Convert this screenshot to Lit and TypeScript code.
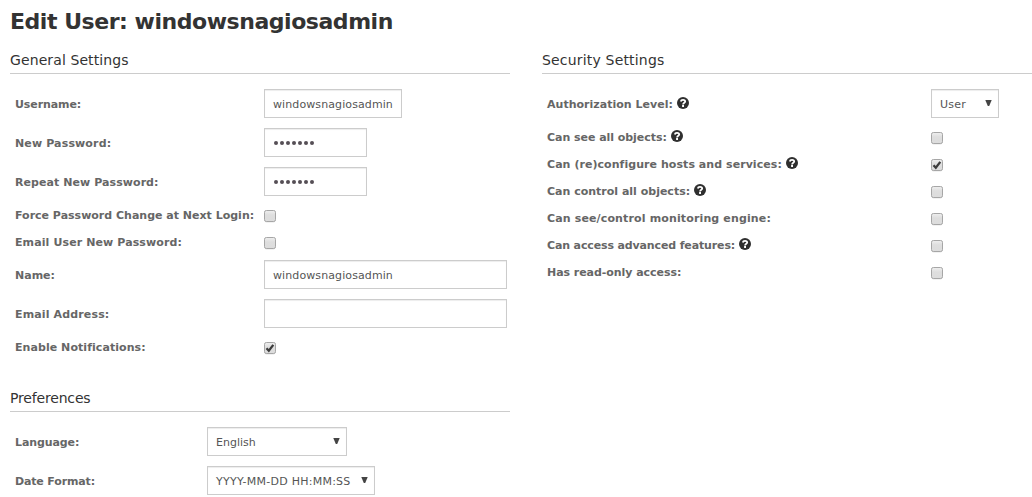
import { LitElement, html, css, svg, nothing } from "lit";
import { customElement, property } from "lit/decorators.js";

interface Row {
  label: string;
  track?: number;
  help?: boolean;
  kind: "text" | "password" | "check" | "select";
  value?: string;
  vtrack?: number;
  width?: number;
  checked?: boolean;
}

const general: Row[] = [
  { label: "Username:", track: -0.1, kind: "text", value: "windowsnagiosadmin", vtrack: 0.1, width: 138 },
  { label: "New Password:", track: 0.14, kind: "password", value: "•••••••", width: 103 },
  { label: "Repeat New Password:", track: 0.07, kind: "password", value: "•••••••", width: 103 },
  { label: "Force Password Change at Next Login:", kind: "check" },
  { label: "Email User New Password:", track: 0.11, kind: "check" },
  { label: "Name:", kind: "text", value: "windowsnagiosadmin", vtrack: 0.1, width: 243 },
  { label: "Email Address:", track: 0.14, kind: "text", value: "", width: 243 },
  { label: "Enable Notifications:", track: 0.06, kind: "check", checked: true },
];

const preferences: Row[] = [
  { label: "Language:", track: -0.1, kind: "select", value: "English", width: 140 },
  { label: "Date Format:", track: -0.15, kind: "select", value: "YYYY-MM-DD HH:MM:SS", vtrack: 0.25, width: 168 },
];

const security: Row[] = [
  { label: "Authorization Level:", track: 0.02, help: true, kind: "select", value: "User", vtrack: 0.25, width: 68 },
  { label: "Can see all objects:", track: -0.04, help: true, kind: "check" },
  { label: "Can (re)configure hosts and services:", track: 0.055, help: true, kind: "check", checked: true },
  { label: "Can control all objects:", help: true, kind: "check" },
  { label: "Can see/control monitoring engine:", track: 0.14, kind: "check" },
  { label: "Can access advanced features:", track: -0.135, help: true, kind: "check" },
  { label: "Has read-only access:", track: -0.05, kind: "check" },
];

@customElement("settings-row")
class SettingsRow extends LitElement {
  @property({ attribute: false }) row!: Row;

  static styles = css`
    :host { display: block; }
    .row { display: flex; align-items: center; height: 39px; padding-left: 5px; box-sizing: border-box; font-size: 11px; line-height: 17px; white-space: nowrap; }
    .row.short { height: 27px; }
    .label { display: flex; width: var(--label-col); flex: none; padding-top: 2px; font-weight: bold; color: #666; }
    .help { display: block; margin: 1px 0 0 4px; }
    .field { box-sizing: border-box; display: flex; align-items: center; justify-content: space-between; height: 29px; border: 1px solid #ccc; padding: 0 6px 0 8px; color: #555; background: #fff; box-shadow: inset 0 1px 1px rgba(0, 0, 0, 0.075); }
    .value { padding-top: 2px; }
    .dots { display: flex; gap: 2px; padding: 1px 0 0 1px; }
    .dot { width: 4px; height: 4px; border-radius: 50%; background: #554f55; }
    .box { display: block; margin-top: 3px; }
    .arrow { display: block; margin-top: -1px; }
  `;

  render() {
    const r = this.row;
    return html`<div class="row ${r.kind === "check" ? "short" : ""}">
      <div class="label">
        <span style="letter-spacing:${r.track ?? 0}px">${r.label}</span>
        ${r.help ? this.helpIcon() : nothing}
      </div>
      ${r.kind === "check" ? this.box() : this.field()}
    </div>`;
  }

  helpIcon() {
    return html`<svg class="help" width="12" height="12" viewBox="0 0 12 12">
      <circle cx="6" cy="6" r="6" fill="#2f2f2f" />
      <path d="M3.800 4.500C4 3.200 4.800 2.800 6 2.800s2.200.6 2.200 1.700C8.200 5.700 6.100 5.800 6.100 7.400" fill="none" stroke="#fff" stroke-width="1.800" />
      <path d="M5.100 8.100h1.900v1.800h-1.900z" fill="#fff" />
    </svg>`;
  }

  box() {
    return html`<svg class="box" width="12" height="13" viewBox="0 0 12 13">
      <defs><linearGradient id="g" x2="0" y2="1"><stop offset="0" stop-color="#efefef" /><stop offset=".4" stop-color="#dedede" /><stop offset="1" stop-color="#dcdcdc" /></linearGradient></defs>
      <rect x=".5" y="1.200" width="11" height="11.300" rx="2" fill="#e6e6e6" />
      <rect x=".5" y=".5" width="11" height="11" rx="1.800" fill="url(#g)" stroke="#a6a6a6" />
      ${this.row.checked ? svg`<path d="M2.500 6.300L4.800 8.700L9.300 2.900" fill="none" stroke="#3c3c3c" stroke-width="2.300" />` : nothing}
    </svg>`;
  }

  field() {
    const r = this.row;
    return html`<div class="field" style="width:${r.width}px">
      ${r.kind === "password"
        ? html`<span class="dots">${[...r.value!].map(() => html`<i class="dot"></i>`)}</span>`
        : html`<span class="value" style="letter-spacing:${r.vtrack ?? 0}px">${r.value}</span>`}
      ${r.kind === "select"
        ? html`<svg class="arrow" width="7" height="6" viewBox="0 0 7 6"><path d="M.300 0H6.700L4.200 6H2.800z" fill="#444" /></svg>`
        : nothing}
    </div>`;
  }
}

@customElement("app-root")
class AppRoot extends LitElement {
  static styles = css`
    :host { display: block; height: 497px; overflow: hidden; background: #fff; font-family: "DejaVu Sans", sans-serif; color: #333; }
    .page { padding: 8px 0 0 10px; }
    .title { margin: 0; font-size: 22px; line-height: 28px; letter-spacing: -0.46px; font-weight: bold; color: #333; white-space: nowrap; }
    .columns { display: grid; grid-template-columns: 500px 490px; gap: 32px; padding-top: 14px; }
    .heading { margin: 0 0 10px; height: 24px; box-sizing: border-box; border-bottom: 1px solid #ccc; font-size: 14px; line-height: 20px; font-weight: normal; white-space: nowrap; }
    .wide { --label-col: 249px; }
    .narrow { --label-col: 192px; padding-top: 28px; }
    .security { --label-col: 384px; }
  `;

  section(name: string, title: string, track: number, rows: Row[]) {
    return html`<section class=${name}>
      <h2 class="heading" style="letter-spacing:${track}px">${title}</h2>
      ${rows.map((row) => html`<settings-row .row=${row}></settings-row>`)}
    </section>`;
  }

  render() {
    return html`<main class="page">
      <h1 class="title">Edit User: windowsnagiosadmin</h1>
      <div class="columns">
        <div>
          ${this.section("wide", "General Settings", 0.1, general)}
          ${this.section("narrow", "Preferences", -0.17, preferences)}
        </div>
        ${this.section("security", "Security Settings", 0.18, security)}
      </div>
    </main>`;
  }
}
